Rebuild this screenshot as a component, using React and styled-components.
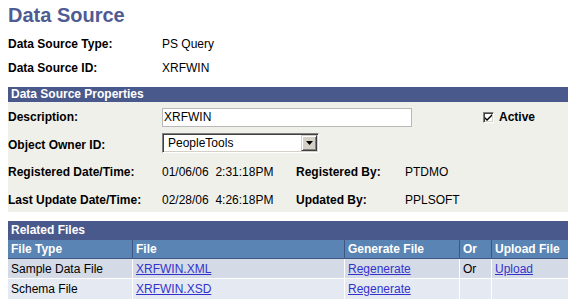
import React from 'react';
import styled, { createGlobalStyle } from 'styled-components';

const Global = createGlobalStyle`
  html, body { margin: 0; padding: 0; background: #ffffff; }
  body {
    font-family: "Liberation Sans", Arial, Helvetica, sans-serif;
    font-size: 12px;
    color: #000000;
  }
`;

const Page = styled.div`
  width: 560px;
  padding: 3px 0 0 8px;
`;

const Title = styled.h1`
  margin: 0;
  font-size: 20px;
  line-height: 24px;
  font-weight: bold;
  color: #4f5b93;
`;

const InfoGrid = styled.div`
  display: grid;
  grid-template-columns: 154px auto;
  grid-auto-rows: 24px;
  align-items: center;
  margin-top: 5px;
`;

const Label = styled.span`
  font-weight: bold;
  white-space: pre;
  grid-column: ${(p) => p.$col || 'auto'};
`;

const Value = styled.span`
  white-space: pre;
  grid-column: ${(p) => p.$col || 'auto'};
`;

const GroupBox = styled.section`
  margin-top: 7px;
  background: #f0f0eb;
`;

const BoxHeader = styled.div`
  background: #4a598b;
  color: #ffffff;
  font-weight: bold;
  height: ${(p) => p.$h || 15}px;
  line-height: ${(p) => p.$h || 15}px;
  padding-left: 3px;
`;

const FormGrid = styled.div`
  display: grid;
  grid-template-columns: 154px 134px 109px 78px 85px;
  grid-template-rows: 30px 25px 30px 25px;
  align-items: center;
`;

const TextInput = styled.div`
  grid-column: 2 / span 3;
  width: 250px;
  height: 19px;
  box-sizing: border-box;
  border: 1px solid #b9b9b9;
  background: #ffffff;
  line-height: 17px;
  padding-left: 1px;
`;

const Select = styled.div`
  grid-column: 2 / span 2;
  align-self: start;
  margin-top: 1px;
  width: 157px;
  height: 20px;
  box-sizing: border-box;
  display: flex;
  align-items: stretch;
  background: #ffffff;
  border: 1px solid;
  border-color: #808080 #ffffff #ffffff #808080;
  box-shadow: inset 1px 1px #404040, inset -1px -1px #d4d0c8;
  padding: 1px;
`;

const SelectText = styled.span`
  flex: 1;
  line-height: 16px;
  padding-left: 4px;
`;

const DropButton = styled.span`
  width: 16px;
  box-sizing: border-box;
  background: #d4d0c8;
  border: 1px solid;
  border-color: #d4d0c8 #404040 #404040 #d4d0c8;
  box-shadow: inset 1px 1px #ffffff, inset -1px -1px #808080;
  display: flex;
  align-items: center;
  justify-content: center;
`;

const CheckWrap = styled.label`
  grid-column: 5;
  display: flex;
  align-items: center;
  gap: 5px;
  font-weight: bold;
`;

const CheckBox = styled.span`
  width: 11px;
  height: 11px;
  box-sizing: border-box;
  background: #ffffff;
  border: 1px solid;
  border-color: #808080 #ffffff #ffffff #808080;
  box-shadow: inset 1px 1px #404040, inset -1px -1px #d4d0c8;
  display: flex;
  align-items: center;
  justify-content: center;
`;

const FilesSection = styled.section`
  margin-top: 9px;
`;

const FilesTable = styled.table`
  width: 560px;
  border-collapse: separate;
  border-spacing: 0;
  table-layout: fixed;
`;

const Th = styled.th`
  background: #5a84b3;
  color: #ffffff;
  font-weight: bold;
  text-align: left;
  height: 19px;
  padding: 0 0 0 3px;
  border-right: 1px solid #3e5585;
  border-bottom: 1px solid #3e5585;
  box-sizing: border-box;
  white-space: nowrap;
  &:last-child { border-right: 0; }
`;

const Td = styled.td`
  background: ${(p) => (p.$alt ? '#e5eaf2' : '#d4dbe7')};
  height: 20px;
  padding: 0 0 0 3px;
  border-right: 1px solid #ffffff;
  border-bottom: ${(p) => (p.$alt ? '0' : '1px solid #ffffff')};
  box-sizing: border-box;
  white-space: nowrap;
  &:last-child { border-right: 0; }
`;

const Link = styled.a`
  color: #3333cc;
  text-decoration: underline;
  cursor: pointer;
`;

const cols = [125, 212, 115, 32, 76];

const files = [
  { type: 'Sample Data File', file: 'XRFWIN.XML', or: 'Or', upload: 'Upload' },
  { type: 'Schema File', file: 'XRFWIN.XSD', or: '', upload: '' },
];

export default function App() {
  return (
    <>
      <Global />
      <Page>
        <Title>Data Source</Title>
        <InfoGrid>
          <Label>Data Source Type:</Label>
          <Value>PS Query</Value>
          <Label>Data Source ID:</Label>
          <Value>XRFWIN</Value>
        </InfoGrid>

        <GroupBox>
          <BoxHeader>Data Source Properties</BoxHeader>
          <FormGrid>
            <Label>Description:</Label>
            <TextInput>XRFWIN</TextInput>
            <CheckWrap>
              <CheckBox>
                <svg width="7" height="7" viewBox="0 0 7 7">
                  <path d="M0 3 L0 5 L2 7 L7 2 L7 0 L2 5 Z" fill="#000" />
                </svg>
              </CheckBox>
              Active
            </CheckWrap>

            <Label>Object Owner ID:</Label>
            <Select>
              <SelectText>PeopleTools</SelectText>
              <DropButton>
                <svg width="7" height="4" viewBox="0 0 7 4">
                  <path d="M0 0 H7 L3.5 4 Z" fill="#000" />
                </svg>
              </DropButton>
            </Select>

            <Label $col="1">Registered Date/Time:</Label>
            <Value>01/06/06  2:31:18PM</Value>
            <Label>Registered By:</Label>
            <Value $col="4 / span 2">PTDMO</Value>

            <Label $col="1">Last Update Date/Time:</Label>
            <Value>02/28/06  4:26:18PM</Value>
            <Label>Updated By:</Label>
            <Value $col="4 / span 2">PPLSOFT</Value>
          </FormGrid>
        </GroupBox>

        <FilesSection>
          <BoxHeader $h={19}>Related Files</BoxHeader>
          <FilesTable>
            <colgroup>
              {cols.map((w, i) => (
                <col key={i} style={{ width: w }} />
              ))}
            </colgroup>
            <thead>
              <tr>
                <Th>File Type</Th>
                <Th>File</Th>
                <Th>Generate File</Th>
                <Th>Or</Th>
                <Th>Upload File</Th>
              </tr>
            </thead>
            <tbody>
              {files.map((f, i) => (
                <tr key={f.file}>
                  <Td $alt={i % 2 === 1}>{f.type}</Td>
                  <Td $alt={i % 2 === 1}><Link>{f.file}</Link></Td>
                  <Td $alt={i % 2 === 1}><Link>Regenerate</Link></Td>
                  <Td $alt={i % 2 === 1}>{f.or}</Td>
                  <Td $alt={i % 2 === 1}>{f.upload && <Link>{f.upload}</Link>}</Td>
                </tr>
              ))}
            </tbody>
          </FilesTable>
        </FilesSection>
      </Page>
    </>
  );
}
